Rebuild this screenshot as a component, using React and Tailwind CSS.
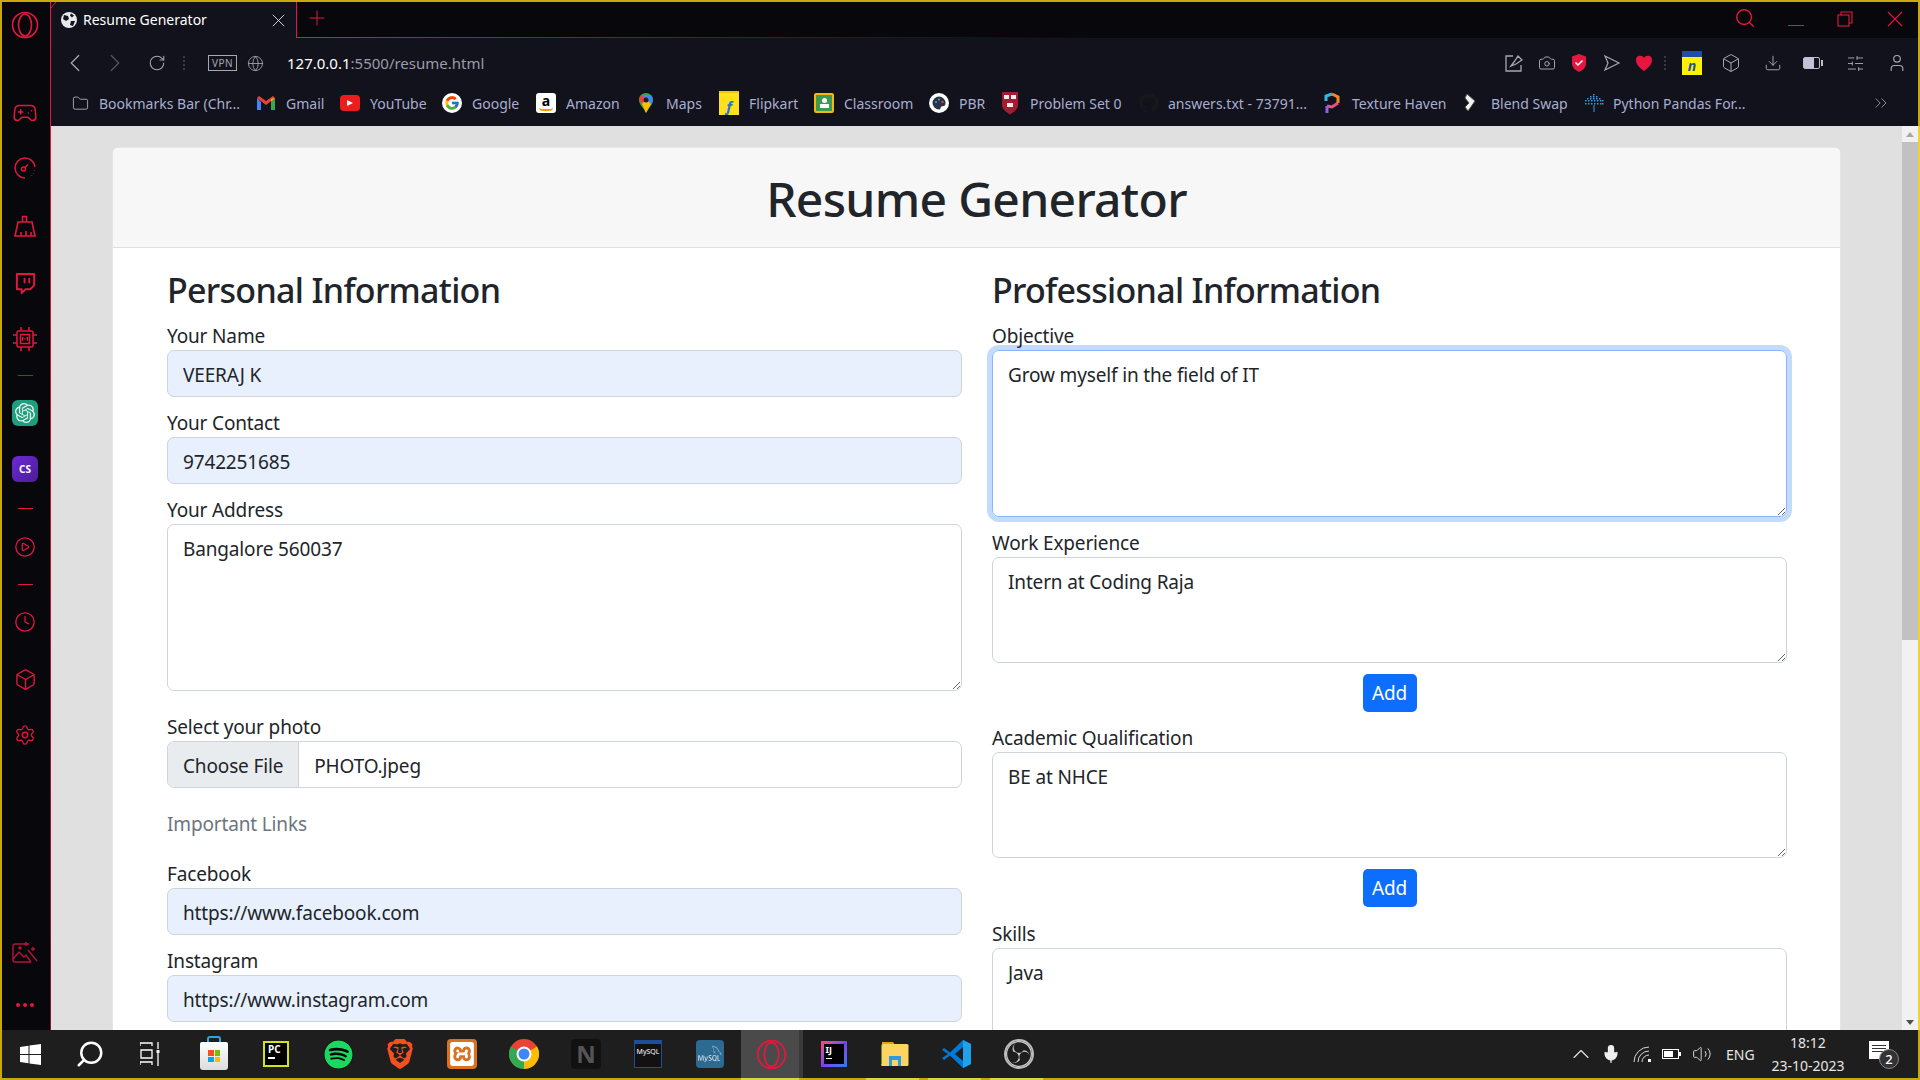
import React from 'react';
import { Gamepad2, Twitch, CirclePlay, Clock, Box, Settings, Folder, ChevronLeft, ChevronRight, RotateCw, Globe, Search, Plus, Camera, Download, SlidersHorizontal, User, ChevronsRight, ChevronUp, Mic, Volume2 } from 'lucide-react';
import { SiOpenai, SiBrave, SiXampp, SiObsstudio, SiMysql } from 'react-icons/si';
import { FaSpotify, FaGithub } from 'react-icons/fa';
import { FcGoogle } from 'react-icons/fc';

const RED = '#e5173f';

const OperaMark = ({ s = 28 }) => (
  <svg width={s} height={s} viewBox="0 0 28 28" fill="none" stroke={RED} strokeWidth="1.6">
    <circle cx="14" cy="14" r="12.5" />
    <ellipse cx="14" cy="14" rx="6.5" ry="11" />
  </svg>
);

const Cross = ({ s, c, w = 1.1, cls = '' }) => (
  <svg width={s} height={s} viewBox="0 0 16 16" fill="none" stroke={c} strokeWidth={w} className={cls}>
    <path d="M1 1l14 14M15 1L1 15" />
  </svg>
);

const Broom = () => (
  <svg width="22" height="24" viewBox="0 0 22 24" fill="none" stroke={RED} strokeWidth="1.6">
    <path d="M8.5 8V2.5h4V8M4 8h14l3 14H1zM7 22v-4M12 22v-5M17 22v-4" />
  </svg>
);
const GaugeI = () => (
  <svg width="22" height="22" viewBox="0 0 22 22" fill="none" stroke={RED} strokeWidth="1.5">
    <path d="M21 10A10 10 0 1 0 11 21" /><circle cx="9.5" cy="12" r="2" /><path d="M11 10.5l3-3" /><path d="M20.5 13v.5M19.5 16v.5M17.5 18.5v.5" />
  </svg>
);
const Chip = () => (
  <svg width="26" height="26" viewBox="0 0 26 26" fill="none" stroke={RED} strokeWidth="1.5">
    <rect x="5" y="5" width="16" height="16" rx="1.5" /><rect x="8.5" y="8.5" width="9" height="9" />
    <path d="M9 5V1M17 5V1M9 25v-4M17 25v-4M1 9h4M1 17h4M21 9h4M21 17h4" />
    <path d="M10.5 15v-4l2.5 2.5 2.5-2.5v4" strokeWidth="1" />
  </svg>
);
const ImageMagic = () => (
  <svg width="26" height="22" viewBox="0 0 26 22" fill="none" stroke="#b3153a" strokeWidth="1.4">
    <path d="M17 2H3a2 2 0 0 0-2 2v14a2 2 0 0 0 2 2h16" /><path d="M1 17l6-7 5 5 2-2 5 7" /><circle cx="8" cy="6" r="1" fill="#b3153a" /><path d="M16 8l9 11M14 0v4M12 2h4M21 5v4M19 7h4" />
  </svg>
);

const sideItems = [
  ['h-[56px]', <Gamepad2 size={26} color={RED} strokeWidth={1.4} />],
  ['h-[54px]', <GaugeI />],
  ['h-[62px]', <Broom />],
  ['h-[52px]', <Twitch size={23} color={RED} strokeWidth={2} />],
  ['h-[60px]', <Chip />],
  ['h-[12px]', <div className="w-[15px] h-px bg-[#b3153a]" />],
  ['h-[64px]', <div className="w-[26px] h-[26px] rounded-[6px] bg-[#1f9e7d] flex items-center justify-center"><SiOpenai size={20} color="#e8f5f1" /></div>],
  ['h-[48px]', <div className="w-[26px] h-[26px] rounded-[6px] bg-gradient-to-br from-[#6d28d9] to-[#4c1d95] flex items-center justify-center text-white text-[10px] font-bold">CS</div>],
  ['h-[30px]', <div className="w-[15px] h-px bg-[#e5173f]" />],
  ['h-[48px]', <CirclePlay size={22} color={RED} strokeWidth={1.4} />],
  ['h-[26px]', <div className="w-[15px] h-px bg-[#e5173f]" />],
  ['h-[50px]', <Clock size={22} color={RED} strokeWidth={1.4} />],
  ['h-[64px]', <Box size={23} color={RED} strokeWidth={1.4} />],
  ['h-[48px]', <Settings size={22} color={RED} strokeWidth={1.4} />],
];

function Sidebar() {
  return (
    <>
      <aside className="w-[48px] shrink-0 bg-[#07070c] pr-[2px] flex flex-col items-stretch">
        <div className="h-[46px] flex items-center justify-center"><OperaMark /></div>
        <div className="h-[37px]" />
        {sideItems.map(([h, icon], i) => (
          <div key={i} className={`${h} flex items-center justify-center`}>{icon}</div>
        ))}
        <div className="flex-1" />
        <div className="h-[40px] flex items-center justify-center"><ImageMagic /></div>
        <div className="h-[20px]" />
        <div className="h-[24px] flex items-center justify-center gap-[3px]">
          <span className="w-[4px] h-[4px] rounded-full bg-[#e5173f]" />
          <span className="w-[4px] h-[4px] rounded-full bg-[#e5173f]" />
          <span className="w-[4px] h-[4px] rounded-full bg-[#e5173f]" />
        </div>
        <div className="h-[13px]" />
      </aside>
      <div className="w-px shrink-0 bg-gradient-to-b from-[#ee1740] to-[#8f1030]" />
    </>
  );
}

function TabStrip() {
  return (
    <div className="h-[36px] flex bg-[#07070c] relative shrink-0">
      <div className="w-[246px] bg-[#12121c] border-r border-[#e5173f] flex items-center pl-[10px] pr-[11px] text-white">
        <svg width="16" height="16" viewBox="0 0 16 16" className="mr-[6px] shrink-0">
          <circle cx="8" cy="8" r="8" fill="#e8e8ec" />
          <path d="M3 3l4 1 1 3-3 2-3-2zM10 9l4 0-2 5-3-1zM10 1.500l3 2-2 2-2-2z" fill="#12121c" />
        </svg>
        <span className="text-[14px] leading-[20px] whitespace-nowrap w-[121px]">Resume Generator</span>
        <span className="flex-1" />
        <Cross s={13} c="#e6e6ea" />
      </div>
      <div className="ml-[8px] flex items-center"><Plus size={24} strokeWidth={1} color={RED} className="-mt-[4px]" /></div>
      <div className="flex-1" />
      <Search size={22} strokeWidth={1.6} color={RED} className="mt-[5px] mr-[32px]" />
      <div className="w-[16px] h-px bg-[#e5173f] mt-[23px] mr-[33px]" />
      <svg width="16" height="16" viewBox="0 0 16 16" fill="none" stroke={RED} strokeWidth="1.1" className="mt-[9px] mr-[34px]">
        <rect x="1" y="4" width="11" height="11" /><path d="M4 4V1h11v11h-3" />
      </svg>
      <Cross s={16} c={RED} cls="mt-[9px] mr-[15px]" />
      <div className="absolute left-[246px] bottom-0 w-[800px] h-px bg-gradient-to-r from-[#e5173f] to-transparent" />
      <svg width="5" height="6" viewBox="0 0 5 6" className="absolute left-0 top-0">
        <path d="M0 0h5L0 6z" fill="#07070c" /><path d="M5 0L0 6" stroke={RED} strokeWidth="1" />
      </svg>
    </div>
  );
}

const Dots = ({ cls }) => (
  <div className={`w-[2px] h-[14px] flex flex-col justify-between ${cls}`}>
    <span className="h-[2px] bg-[#3a3a44]" /><span className="h-[2px] bg-[#3a3a44]" /><span className="h-[2px] bg-[#3a3a44]" /><span className="h-[2px] bg-[#3a3a44]" />
  </div>
);

function AddressBar() {
  const c = '#a7a7b3';
  return (
    <div className="h-[50px] flex items-center shrink-0">
      <ChevronLeft size={30} strokeWidth={1} color={c} className="ml-[9px]" />
      <ChevronRight size={30} strokeWidth={1} color="#54545e" className="ml-[10px]" />
      <RotateCw size={18} strokeWidth={1.4} color={c} className="ml-[18px]" />
      <Dots cls="ml-[17px]" />
      <div className="ml-[23px] w-[29px] h-[16px] border border-[#a7a7b3] text-[10px] leading-[14px] text-center text-[#a7a7b3] tracking-[0.5px]">VPN</div>
      <Globe size={17} strokeWidth={1.2} color={c} className="ml-[10px]" />
      <div className="ml-[23px] text-[15px] whitespace-nowrap w-[196px] text-[#9b9baa]"><span className="text-white">127.0.0.1</span>:5500/resume.html</div>
      <div className="flex-1" />
      <svg width="20" height="20" viewBox="0 0 20 20" fill="none" stroke={c} strokeWidth="1.3">
        <path d="M9 3H2v15h15v-6M7 13l3-4 4-6 4 4-6 4-5 2z" />
      </svg>
      <Camera size={18} strokeWidth={1.3} color={c} className="ml-[14px] mr-[1px]" />
      <svg width="20" height="20" viewBox="0 0 20 20" className="ml-[12px]">
        <path d="M10 1l7 2.500v7c0 4-3.500 7-7 8.500-3.500-1.500-7-4.500-7-8.500v-7z" fill={RED} /><path d="M6.500 9.500l2.500 2.500 4.500-4.500" fill="none" stroke="#fff" strokeWidth="1.5" />
      </svg>
      <svg width="20" height="20" viewBox="0 0 20 20" fill="none" stroke={c} strokeWidth="1.2" className="ml-[13px]">
        <path d="M3 3l14 7-14 7 3-7z" />
      </svg>
      <svg width="20" height="20" viewBox="0 0 20 20" className="ml-[12px]">
        <path d="M10 18C4 13.500 2 10.500 2 7a4.300 4.300 0 0 1 8-2.200A4.300 4.300 0 0 1 18 7c0 3.500-2 6.500-8 11z" fill={RED} />
      </svg>
      <Dots cls="ml-[10px]" />
      <div className="ml-[16px] w-[20px] h-[24px] bg-[#fff200] border-t-[6px] border-[#1d4fa8] flex items-center justify-center">
        <span className="text-[14px] font-bold italic text-[#1d4fa8] leading-none">n</span>
      </div>
      <Box size={20} strokeWidth={1.2} color={c} className="ml-[19px]" />
      <Download size={18} strokeWidth={1.3} color={c} className="ml-[23px] mr-[1px]" />
      <div className="ml-[20px] w-[20px] h-[12px] flex items-center">
        <div className="w-[17px] h-[12px] rounded-[2px] border border-[#bdbccb] bg-gradient-to-r from-[#c4c0d8] from-70% to-[#12121c] to-70%" />
        <div className="w-[2px] h-[6px] bg-[#bdbccb] ml-[1px]" />
      </div>
      <SlidersHorizontal size={19} strokeWidth={1.2} color={c} className="ml-[23px] mr-[1px]" />
      <User size={20} strokeWidth={1.4} color={c} className="ml-[21px] mr-[11px]" />
    </div>
  );
}

const GmailI = () => (
  <svg width="18" height="14" viewBox="0 0 18 14">
    <path d="M0 2v12h4V6z" fill="#4285f4" /><path d="M18 2v12h-4V6z" fill="#34a853" /><path d="M0 2l9 7 9-7-2-2-7 5-7-5z" fill="#ea4335" /><path d="M14 3l4-1-4 4z" fill="#fbbc04" />
  </svg>
);
const YtI = () => (
  <div className="w-[20px] h-[16px] rounded-[4px] bg-[#ee1d1d] flex items-center justify-center">
    <span className="w-0 h-0 border-y-[3.500px] border-y-transparent border-l-[6px] border-l-white" />
  </div>
);
const GoogleI = () => (
  <div className="w-[20px] h-[20px] rounded-full bg-white flex items-center justify-center"><FcGoogle size={16} /></div>
);
const AmazonI = () => (
  <div className="w-[20px] h-[20px] rounded-[3px] bg-white relative flex justify-center">
    <span className="text-[14px] leading-[15px] font-bold text-black">a</span>
    <span className="absolute bottom-[2px] left-[3px] w-[14px] h-[4px] border-b-2 border-[#f90] rounded-b-full" />
  </div>
);
const MapsI = () => (
  <svg width="14" height="20" viewBox="0 0 14 20">
    <path d="M7 0a7 7 0 0 1 7 7c0 5-5 8-7 13C5 15 0 12 0 7a7 7 0 0 1 7-7z" fill="#34a853" />
    <path d="M2 2l10 10 2-5a7 7 0 0 0-2-5z" fill="#4285f4" /><path d="M2 2a7 7 0 0 0-2 5l3 4 5-5z" fill="#ea4335" /><path d="M3 11l4-5 5 5-5 9z" fill="#fbbc04" /><circle cx="7" cy="7" r="2.500" fill="#1f1f1f" />
  </svg>
);
const FlipI = () => (
  <div className="w-[20px] h-[24px] bg-[#ffe11b] border-t-2 border-[#f0c800] flex items-end justify-center">
    <span className="text-[15px] leading-[18px] font-bold italic text-[#1f74d6]">f</span>
  </div>
);
const ClassI = () => (
  <div className="w-[20px] h-[20px] rounded-[2px] bg-[#3c9a55] border-2 border-[#f5b90f] flex flex-col items-center justify-center gap-[1px]">
    <span className="w-[5px] h-[5px] rounded-full bg-white" /><span className="w-[9px] h-[4px] bg-white" />
  </div>
);
const PbrI = () => (
  <svg width="20" height="20" viewBox="0 0 20 20">
    <circle cx="10" cy="10" r="10" fill="#fff" /><path d="M10 3.500a6.500 6.500 0 0 0 0 13c2 0 1-2 2.500-3s4 .5 4-3.500a6.500 6.500 0 0 0-6.500-6.500z" fill="#263548" /><circle cx="13.500" cy="9" r="1.200" fill="#e5394f" /><circle cx="10" cy="6.500" r="1" fill="#5aa" /><circle cx="7" cy="9" r="1" fill="#69c" />
  </svg>
);
const HarvardI = () => (
  <svg width="16" height="24" viewBox="0 0 16 24">
    <path d="M0 1h16v13c0 4-4 7-8 9.500C4 21 0 18 0 14z" fill="#a51c30" /><rect x="2" y="4" width="5" height="4" fill="#eee" /><rect x="9" y="4" width="5" height="4" fill="#eee" /><rect x="5" y="12" width="6" height="4" fill="#eee" />
  </svg>
);
const TextureI = () => (
  <svg width="16" height="22" viewBox="0 0 16 22" fill="none" strokeWidth="3">
    <path d="M2 9V4l6-2" stroke="#38b6e8" /><path d="M8 2l6 3v6" stroke="#f08a24" /><path d="M14 11l-6 4-5-1" stroke="#e5518a" /><path d="M3 14v7" stroke="#9a5fe0" />
  </svg>
);
const BlendI = () => (
  <svg width="14" height="20" viewBox="0 0 14 20">
    <path d="M4 1l8 7-7 10-3-4 4-4-4-5z" fill="#f2f2f2" stroke="#555" strokeWidth="1" />
  </svg>
);
const PandasI = () => (
  <svg width="20" height="20" viewBox="0 0 20 20" fill="#2d9fe0">
    {[[9,1],[6,3],[9,3],[12,3],[3,5],[6,5],[9,5],[12,5],[15,5],[1,7],[4,7],[7,7],[10,7],[13,7],[16,7],[18,7],[1,10],[4,10],[7,10],[10,10],[13,10],[16,10],[18,10]].map(([x, y], i) => (
      <rect key={i} x={x} y={y} width="1.500" height="1.500" />
    ))}
    <path d="M9.500 12h1v7h-1z" />
  </svg>
);

const bookmarks = [
  [<Folder size={17} strokeWidth={1.2} color="#b8b8c4" />, 'Bookmarks Bar (Chr...', 'ml-[15px]', 'ml-[5px] w-[141px]'],
  [<GmailI />, 'Gmail', 'ml-[12px]', 'ml-[6px] w-[38px]'],
  [<YtI />, 'YouTube', 'ml-[12px]', 'ml-[6px] w-[57px]'],
  [<GoogleI />, 'Google', 'ml-[11px]', 'ml-[6px] w-[48px]'],
  [<AmazonI />, 'Amazon', 'ml-[12px]', 'ml-[6px] w-[54px]'],
  [<MapsI />, 'Maps', 'ml-[12px]', 'ml-[6px] w-[36px]'],
  [<FlipI />, 'Flipkart', 'ml-[13px]', 'ml-[6px] w-[48px]'],
  [<ClassI />, 'Classroom', 'ml-[13px]', 'ml-[6px] w-[68px]'],
  [<PbrI />, 'PBR', 'ml-[13px]', 'ml-[6px] w-[26px]'],
  [<HarvardI />, 'Problem Set 0', 'ml-[11px]', 'ml-[6px] w-[93px]'],
  [<FaGithub size={20} color="#17171c" />, 'answers.txt - 73791...', 'ml-[12px]', 'ml-[5px] w-[139px]'],
  [<TextureI />, 'Texture Haven', 'ml-[11px]', 'ml-[6px] w-[94px]'],
  [<BlendI />, 'Blend Swap', 'ml-[10px]', 'ml-[7px] w-[76px]'],
  [<PandasI />, 'Python Pandas For...', 'ml-[13px]', 'ml-[5px] w-[134px]'],
];

function BookmarkBar() {
  return (
    <div className="h-[38px] flex items-center shrink-0 -mt-[4px]">
      {bookmarks.map(([icon, text, ml, tw], i) => (
        <div key={i} className={`flex items-center h-full ${ml}`}>
          <span className="w-[28px] flex items-center justify-center">{icon}</span>
          <span className={`${tw} text-[14px] whitespace-nowrap text-[#a9aed0]`}>{text}</span>
        </div>
      ))}
      <div className="flex-1" />
      <ChevronsRight size={20} strokeWidth={1} color="#a7a7b3" className="mr-[27px]" />
    </div>
  );
}

const inputCls = 'block w-full h-[47px] rounded-[7px] border border-[#ced4da] px-[15px] pt-[2px] text-[19px] tracking-[-0.15px] text-[#212529] outline-none';
const areaCls = 'block w-full rounded-[7px] border px-[15px] py-[9px] text-[19px] tracking-[-0.15px] leading-[30px] text-[#212529] outline-none';
const textCls = 'text-[19px] tracking-[-0.15px]';

const Label = ({ children }) => <label className={`block h-[30px] ${textCls} leading-[32px] text-[#212529]`}>{children}</label>;

const Field = ({ label, value, cls = '' }) => (
  <div className={cls}>
    <Label>{label}</Label>
    <input readOnly value={value} className={`${inputCls} bg-[#e8f0fe]`} />
  </div>
);

const Area = ({ label, value, h, cls = '', focus = false }) => (
  <div className={cls}>
    <Label>{label}</Label>
    <textarea
      readOnly
      value={value}
      className={`${areaCls} ${h} ${focus ? 'border-[#86b7fe] shadow-[0_0_0_5px_rgba(13,110,253,0.25)]' : 'border-[#ced4da]'}`}
    />
  </div>
);

const AddBtn = () => (
  <div className="flex justify-center mt-[11px]">
    <button className={`w-[54px] h-[38px] rounded-[5px] bg-[#0d6efd] text-white ${textCls} leading-[38px]`}>Add</button>
  </div>
);

const h2Cls = 'text-[34px] tracking-[-0.7px] font-medium leading-[48px] mb-[6px] text-[#212529]';

function Page() {
  return (
    <div className="flex-1 min-w-0 bg-[#e0e0e0] overflow-hidden px-[61px] pt-[21px]">
      <div className="bg-white rounded-[6px] border border-[rgba(0,0,0,0.1)] h-[1000px]">
        <div className="h-[100px] bg-[#f7f7f7] border-b border-[#dfdfdf] flex items-center justify-center rounded-t-[6px] pt-[3px]">
          <h1 className="text-[48px] tracking-[-0.7px] font-medium text-[#212529] leading-none">Resume Generator</h1>
        </div>
        <div className="grid grid-cols-2 gap-[30px] pl-[54px] pr-[53px] pt-[18px]">
          <div>
            <h2 className={h2Cls}>Personal Information</h2>
            <Field label="Your Name" value="VEERAJ K" />
            <Field label="Your Contact" value="9742251685" cls="mt-[10px]" />
            <Area label="Your Address" value="Bangalore 560037" h="h-[167px]" cls="mt-[10px]" />
            <div className="mt-[20px]">
              <Label>Select your photo</Label>
              <div className={`h-[47px] rounded-[7px] border border-[#ced4da] flex items-center ${textCls} text-[#212529] overflow-hidden`}>
                <div className="h-full px-[15px] pt-[3px] bg-[#e9ecef] border-r border-[#ced4da] flex items-center">Choose File</div>
                <div className="pl-[15px] pt-[3px]">PHOTO.jpeg</div>
              </div>
            </div>
            <div className={`mt-[21px] h-[30px] ${textCls} leading-[30px] text-[#6c757d]`}>Important Links</div>
            <Field label="Facebook" value="https://www.facebook.com" cls="mt-[19px]" />
            <Field label="Instagram" value="https://www.instagram.com" cls="mt-[10px]" />
          </div>
          <div>
            <h2 className={h2Cls}>Professional Information</h2>
            <Area label="Objective" value="Grow myself in the field of IT" h="h-[167px]" focus />
            <Area label="Work Experience" value="Intern at Coding Raja" h="h-[106px]" cls="mt-[10px]" />
            <AddBtn />
            <Area label="Academic Qualification" value="BE at NHCE" h="h-[106px]" cls="mt-[10px]" />
            <AddBtn />
            <Area label="Skills" value="Java" h="h-[106px]" cls="mt-[11px]" />
          </div>
        </div>
      </div>
    </div>
  );
}

function Scrollbar() {
  return (
    <>
      <div className="w-[16px] shrink-0 bg-[#f1f1f1] flex flex-col items-center">
        <div className="h-[16px] flex items-center"><span className="w-0 h-0 border-x-[4px] border-x-transparent border-b-[5px] border-b-[#a8a8a8]" /></div>
        <div className="w-full h-[498px] bg-[#c1c1c1]" />
        <div className="flex-1" />
        <div className="h-[16px] flex items-center"><span className="w-0 h-0 border-x-[4px] border-x-transparent border-t-[5px] border-t-[#505050]" /></div>
      </div>
      <div className="w-[2px] shrink-0 -mr-[2px] bg-[#efd234]" />
    </>
  );
}

const WinI = () => (
  <svg width="21" height="21" viewBox="0 0 21 21" fill="#fff"><path d="M0 3l8.500-1.200V10H0zM9.500 1.600L21 0v10H9.500zM0 11h8.500v8.200L0 18zM9.500 11H21v10L9.500 19.400z" /></svg>
);
const TaskV = () => (
  <svg width="20" height="24" viewBox="0 0 20 24" fill="none" stroke="#fff" strokeWidth="1.3">
    <path d="M0 1h12v3M0 1v3M1 8h11v8H1zM0 23v-3h12v3M18 0v7M18 10v14" /><rect x="16.500" y="8" width="3" height="3" fill="#fff" stroke="none" />
  </svg>
);
const StoreI = () => (
  <div className="relative w-[28px] h-[30px] mt-[2px]">
    <div className="absolute -top-[4px] left-[7px] w-[14px] h-[7px] rounded-t-[3px] border-2 border-b-0 border-[#2aa7e6]" />
    <div className="absolute inset-x-0 bottom-0 top-[2px] rounded-b-[3px] rounded-t-[2px] bg-gradient-to-b from-white to-[#dcdcdc] grid grid-cols-2 gap-[1px] p-[8px]">
      <span className="bg-[#f25022]" /><span className="bg-[#7fba00]" /><span className="bg-[#00a4ef]" /><span className="bg-[#ffb900]" />
    </div>
  </div>
);
const PcI = () => (
  <div className="w-[26px] h-[26px] bg-black border-[2px] border-[#d4e21b] pl-[3px] pt-[1px] text-[10px] leading-[11px] font-bold text-white">
    PC<div className="w-[7px] h-[1.500px] bg-white mt-[2px]" />
  </div>
);
const SpotI = () => <div className="w-[29px] h-[29px] rounded-full bg-black flex items-center justify-center"><FaSpotify size={29} color="#1ed760" /></div>;
const ChromeI = () => (
  <svg width="30" height="30" viewBox="0 0 30 30">
    <circle cx="15" cy="15" r="15" fill="#ea4335" /><path d="M15 15L2 7.500A15 15 0 0 0 15 30z" fill="#34a853" /><path d="M15 15l0 15A15 15 0 0 0 28 7.500z" fill="#fbbc04" />
    <circle cx="15" cy="15" r="7.500" fill="#fff" /><circle cx="15" cy="15" r="5.500" fill="#4285f4" />
  </svg>
);
const NI = () => (
  <div className="w-[30px] h-[30px] rounded-[4px] bg-[#111] flex items-center justify-center text-[24px] font-bold text-[#555] leading-none">N</div>
);
const MysqlCli = () => (
  <div className="w-[28px] h-[28px] bg-[#111] border border-[#1c4f98] border-t-[4px] text-[7px] leading-[16px] text-white whitespace-nowrap text-center">MySQL</div>
);
const WbI = () => (
  <div className="w-[28px] h-[28px] rounded-[4px] bg-[#2d6a92] flex items-center justify-center"><SiMysql size={24} color="#cfdde6" /></div>
);
const IjI = () => (
  <div className="w-[26px] h-[26px] bg-gradient-to-br from-[#ff3d77] via-[#7a3cf0] to-[#087cfa] p-[3px]">
    <div className="w-full h-full bg-black text-white text-[9px] leading-[10px] font-bold pl-[2px] pt-[1px]">IJ<div className="w-[6px] h-px bg-white mt-[3px]" /></div>
  </div>
);
const FilesI = () => (
  <svg width="28" height="26" viewBox="0 0 28 26">
    <path d="M1 1h11l2 3h-13z" fill="#e0a40a" /><rect x="0.500" y="3" width="27" height="22" rx="1.500" fill="#fcd462" /><rect x="8" y="15" width="12" height="10" fill="#2f9ae0" /><rect x="11" y="19" width="6" height="6" fill="#fcd462" /><rect x="0.500" y="23" width="7.500" height="2" fill="#fcd462" />
  </svg>
);
const VsI = () => (
  <svg width="30" height="30" viewBox="0 0 30 30">
    <path d="M21 1l8 4v20l-8 4-13-12.500L2 21l-2-2 6-4-6-4 2-2 6 4.500z" fill="#0078d4" /><path d="M21 1l8 4v20l-8 4z" fill="#1fa0ea" /><path d="M21 8l-8 7 8 7z" fill="#1e1e1e" />
  </svg>
);

const running = 'absolute left-[2px] right-[7px] -bottom-[2px] h-[2px] bg-[#dcd63a]';
const apps = [
  <StoreI />, <PcI />, <SpotI />, <SiBrave size={30} color="#f4501e" />, <div className="w-[30px] h-[30px] rounded-[4px] bg-[#d9711f] flex items-center justify-center"><SiXampp size={24} color="#fff" /></div>, <ChromeI />, <NI />, <MysqlCli />, <WbI />,
];

function Taskbar() {
  return (
    <footer className="h-[48px] shrink-0 bg-[#1e1e1e] flex items-center">
      <div className="w-[56px] flex justify-center"><WinI /></div>
      <div className="ml-[2px] w-[60px] flex justify-center">
        <Search size={30} strokeWidth={2} color="#fff" className="-scale-x-100" />
      </div>
      <div className="w-[60px] flex justify-center"><TaskV /></div>
      <div className="w-[3px]" />
      {apps.map((a, i) => (
        <div key={i} className="w-[62px] flex justify-center">{a}</div>
      ))}
      <div className="relative w-[58px] h-full bg-[#4a4a4a] flex items-center justify-center pl-[2px]">
        <OperaMark s={31} />
        <span className="absolute inset-x-0 -bottom-[2px] h-[2px] bg-[#dcd63a]" />
      </div>
      <div className="w-[4px] h-full bg-[#3a3a3a]" />
      <div className="relative w-[61px] flex justify-center"><IjI /></div>
      <div className="relative w-[62px] flex justify-center h-full items-center"><FilesI /><span className={running} /></div>
      <div className="relative w-[62px] flex justify-center h-full items-center"><VsI /><span className={running} /></div>
      <div className="relative w-[62px] flex justify-center h-full items-center">
        <div className="w-[30px] h-[30px] rounded-full bg-[#1e1e1e] border-2 border-[#bbb] flex items-center justify-center"><SiObsstudio size={26} color="#ccc" /></div>
        <span className={running} />
      </div>
      <div className="flex-1" />
      <ChevronUp size={28} strokeWidth={1} color="#e6e6e6" />
      <Mic size={20} strokeWidth={1.6} color="#f0f0f0" fill="#f0f0f0" className="ml-[6px]" />
      <svg width="20" height="18" viewBox="0 0 20 18" fill="none" stroke="#d8d8d8" strokeWidth="1" className="ml-[12px]">
        <path d="M1 17A15 15 0 0 1 16 2M5 17A11 11 0 0 1 16 6M9 17a7 7 0 0 1 7-7" /><rect x="15" y="14" width="3" height="3" fill="#fff" stroke="none" />
      </svg>
      <div className="ml-[9px] w-[20px] flex items-center">
        <div className="w-[17px] h-[10px] border border-white p-[1px]"><div className="w-[9px] h-full bg-white" /></div>
        <div className="w-[2px] h-[4px] bg-white" />
      </div>
      <Volume2 size={20} strokeWidth={1.1} color="#e6e6e6" className="ml-[10px]" />
      <div className="ml-[14px] w-[28px] text-[14px] text-[#e6e6e6] whitespace-nowrap">ENG</div>
      <div className="ml-[16px] w-[76px] text-center text-[14px] leading-[23px] text-[#e6e6e6] whitespace-nowrap">
        <div>18:12</div><div>23-10-2023</div>
      </div>
      <div className="ml-[23px] mr-[29px] w-[20px] h-[18px] bg-white relative flex flex-col gap-[2px] pt-[4px] px-[3px] -mt-[8px]">
        <span className="h-px bg-[#333]" /><span className="h-px bg-[#333]" /><span className="h-px bg-[#333]" />
        <span className="absolute -right-[10px] -bottom-[10px] w-[20px] h-[20px] rounded-full bg-[#333] border border-[#888] text-white text-[13px] leading-[18px] text-center font-medium">2</span>
      </div>
    </footer>
  );
}

export default function App() {
  return (
    <div className="w-screen h-screen overflow-hidden bg-[#c9a80c] p-[2px] flex flex-col font-['Noto_Sans',sans-serif]">
      <div className="flex-1 min-h-0 flex">
        <Sidebar />
        <div className="flex-1 min-w-0 flex flex-col">
          <TabStrip />
          <div className="bg-[#12121c] h-[88px] flex flex-col shrink-0">
            <AddressBar />
            <BookmarkBar />
          </div>
          <div className="flex-1 min-h-0 flex">
            <Page />
            <Scrollbar />
          </div>
        </div>
      </div>
      <Taskbar />
    </div>
  );
}
